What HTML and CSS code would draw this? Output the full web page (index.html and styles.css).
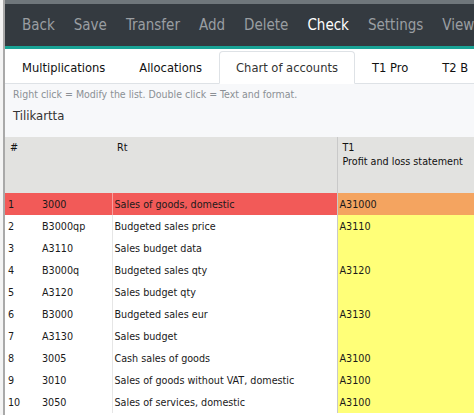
FILE: index.html
```html
<!DOCTYPE html>
<html>
<head>
<meta charset="utf-8">
<link rel="stylesheet" href="styles.css">
</head>
<body>
<div class="app">
  <nav class="topnav">
    <a class="navlink">Back</a>
    <a class="navlink">Save</a>
    <a class="navlink">Transfer</a>
    <a class="navlink">Add</a>
    <a class="navlink">Delete</a>
    <a class="navlink active">Check</a>
    <a class="navlink">Settings</a>
    <a class="navlink">View</a>
  </nav>
  <ul class="tabs">
    <li class="tab">Multiplications</li>
    <li class="tab">Allocations</li>
    <li class="tab active">Chart of accounts</li>
    <li class="tab">T1 Pro</li>
    <li class="tab">T2 B</li>
  </ul>
  <div class="info">
    <div class="hint">Right click = Modify the list. Double click = Text and format.</div>
    <div class="title">Tilikartta</div>
  </div>
  <table class="grid">
    <colgroup>
      <col class="c-num"><col class="c-code"><col class="c-name"><col class="c-t1">
    </colgroup>
    <thead>
      <tr>
        <th colspan="2">#</th>
        <th>Rt</th>
        <th class="t1h">T1<br>Profit and loss statement</th>
      </tr>
    </thead>
    <tbody>
      <tr class="hl"><td>1</td><td>3000</td><td class="name">Sales of goods, domestic</td><td class="t1 orange">A31000</td></tr>
      <tr><td>2</td><td>B3000qp</td><td class="name">Budgeted sales price</td><td class="t1">A3110</td></tr>
      <tr><td>3</td><td>A3110</td><td class="name">Sales budget data</td><td class="t1"></td></tr>
      <tr><td>4</td><td>B3000q</td><td class="name">Budgeted sales qty</td><td class="t1">A3120</td></tr>
      <tr><td>5</td><td>A3120</td><td class="name">Sales budget qty</td><td class="t1"></td></tr>
      <tr><td>6</td><td>B3000</td><td class="name">Budgeted sales eur</td><td class="t1">A3130</td></tr>
      <tr><td>7</td><td>A3130</td><td class="name">Sales budget</td><td class="t1"></td></tr>
      <tr><td>8</td><td>3005</td><td class="name">Cash sales of goods</td><td class="t1">A3100</td></tr>
      <tr><td>9</td><td>3010</td><td class="name">Sales of goods without VAT, domestic</td><td class="t1">A3100</td></tr>
      <tr><td>10</td><td>3050</td><td class="name">Sales of services, domestic</td><td class="t1">A3100</td></tr>
    </tbody>
  </table>
</div>
</body>
</html>
```
FILE: styles.css
```css
html, body {
  margin: 0;
  padding: 0;
}
body {
  background: #f4f4f4;
  font-family: "DejaVu Sans Condensed", "DejaVu Sans", sans-serif;
  overflow: hidden;
  height: 415px;
}
.app {
  margin-left: 3px;
  border-left: 2px solid #a9a9a9;
  background: #fff;
  min-height: 415px;
  width: 469px;
  overflow: hidden;
}
.topnav {
  display: flex;
  align-items: center;
  height: 42px;
  background: #343a40;
  border-top: 4px solid #6f767b;
  border-bottom: 3px solid #1aa396;
  padding-left: 17px;
  white-space: nowrap;
}
.navlink {
  font-size: 15px;
  color: #9a9ea2;
  margin-right: 19px;
}
.navlink.active {
  color: #fff;
}
.tabs {
  list-style: none;
  margin: 0;
  padding: 2px 0 0 0;
  display: flex;
  border-bottom: 1px solid #dee2e6;
  background: #fff;
  white-space: nowrap;
}
.tab {
  font-size: 12.8px;
  line-height: 15px;
  padding: 8px 16px;
  border: 1px solid transparent;
  border-radius: 4px 4px 0 0;
  margin-bottom: -1px;
  color: #111;
}
.tab.active {
  border-color: #dee2e6 #dee2e6 #fff;
  background: #fff;
  color: #333;
}
.info {
  background: #f7f8fa;
  height: 53px;
  padding-left: 8px;
}
.hint {
  font-size: 10.5px;
  color: #8b9095;
  padding-top: 4px;
  line-height: 12px;
}
.title {
  font-size: 13px;
  color: #333;
  margin-top: 8px;
  line-height: 16px;
}
.grid {
  border-collapse: collapse;
  table-layout: fixed;
  width: 600px;
  font-size: 10.7px;
  color: #1a1a1a;
}
.c-num { width: 33px; }
.c-code { width: 74px; }
.c-name { width: 225px; }
.c-t1 { width: 268px; }
.grid th {
  background: #e2e2e0;
  font-weight: normal;
  text-align: left;
  vertical-align: top;
  height: 56px;
  padding: 4px 6px 0 5px;
  line-height: 14px;
  box-sizing: border-box;
  color: #111;
}
.grid th.t1h {
  border-left: 1px solid #c9c9c9;
}
.grid td {
  height: 22px;
  padding: 0 0 0 3px;
  white-space: nowrap;
  overflow: hidden;
  box-sizing: border-box;
}
.grid td:nth-child(2) {
  padding-left: 4px;
}
.grid td.name {
  border-left: 1px solid #e6e6e6;
  padding-left: 2px;
}
.grid td.t1 {
  background: #ffff78;
  border-left: 1px solid #c9c9c9;
  padding-left: 2px;
}
.grid tr.hl td {
  background: #f25a58;
}
.grid tr.hl td.name {
  border-left-color: #f7a09f;
}
.grid tr.hl td.t1.orange {
  background: #f4a460;
}
```
